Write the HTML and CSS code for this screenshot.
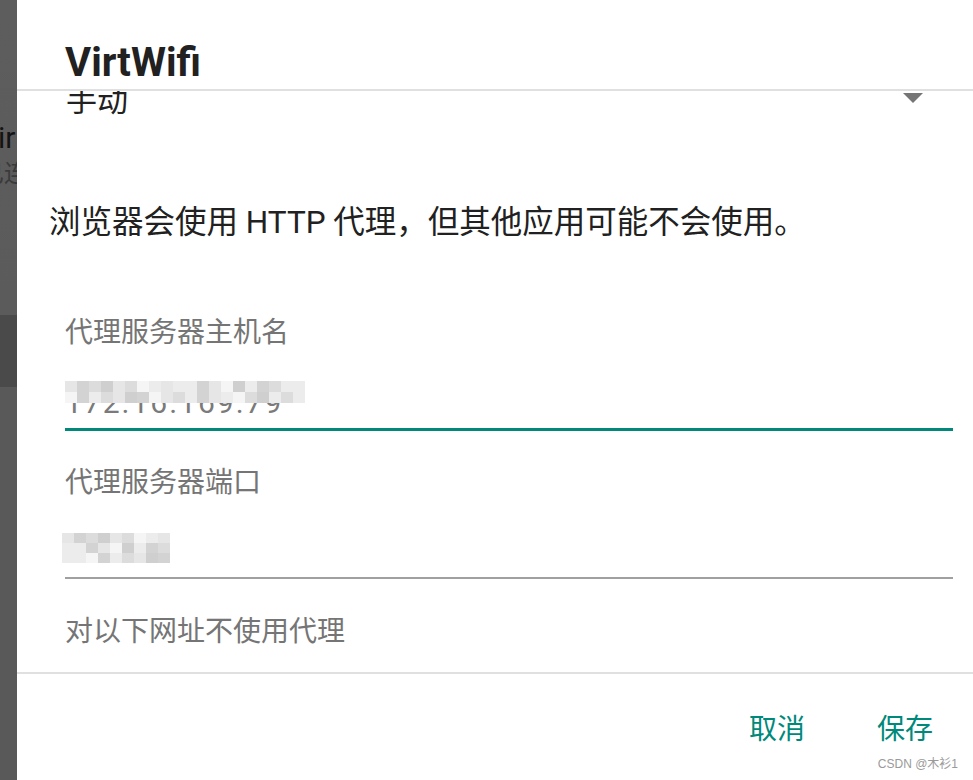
FILE: index.html
```html
<!DOCTYPE html>
<html lang="zh-CN">

<head>
    <meta charset="UTF-8">
    <meta name="viewport" content="width=device-width, initial-scale=1.0">
    <title>VirtWifi 代理</title>
    <link rel="stylesheet" href="styles.css">
</head>

<body>
    <div class="screen">
        <div class="backdrop">
            <div class="peek-title">ir</div>
            <div class="peek-sub">已连接</div>
        </div>

        <div class="dialog">
            <div class="dialog-header">
                <h1 class="dialog-title">VirtWifi</h1>
            </div>

            <div class="dialog-body">
                <div class="spinner">
                    <span class="spinner-value">手动</span>
                    <span class="spinner-arrow"></span>
                </div>

                <p class="message">浏览器会使用 HTTP 代理，但其他应用可能不会使用。</p>

                <div class="field first">
                    <div class="field-label">代理服务器主机名</div>
                    <div class="field-input focused">
                        <span class="field-text">172.16.169.79</span>
                        <div class="mosaic mosaic-host">
                            <span></span><span></span><span></span><span></span><span></span>
                            <span></span><span></span><span></span><span></span><span></span>
                            <span></span><span></span><span></span><span></span><span></span>
                            <span></span><span></span><span></span><span></span><span></span>
                            <span></span><span></span><span></span><span></span><span></span>
                            <span></span><span></span><span></span><span></span><span></span>
                            <span></span><span></span><span></span><span></span><span></span>
                            <span></span><span></span><span></span><span></span><span></span>
                        </div>
                    </div>
                </div>

                <div class="field">
                    <div class="field-label">代理服务器端口</div>
                    <div class="field-input port">
                        <div class="mosaic mosaic-port">
                            <span></span><span></span><span></span><span></span><span></span>
                            <span></span><span></span><span></span><span></span><span></span>
                            <span></span><span></span><span></span><span></span><span></span>
                            <span></span><span></span><span></span><span></span><span></span>
                            <span></span><span></span><span></span><span></span><span></span>
                            <span></span><span></span>
                        </div>
                    </div>
                </div>

                <div class="field last">
                    <div class="field-label">对以下网址不使用代理</div>
                </div>
            </div>

            <div class="dialog-footer">
                <button class="text-btn">取消</button>
                <button class="text-btn">保存</button>
            </div>

            <div class="watermark">CSDN @木衫1</div>
        </div>
    </div>
</body>

</html>
```

FILE: styles.css
```css
body {
    margin: 0;
    font-family: Roboto, "Noto Sans CJK SC", sans-serif;
    overflow: hidden;
}

.screen {
    display: flex;
    width: 973px;
    height: 780px;
}

/* dimmed settings page behind the dialog */
.backdrop {
    width: 17px;
    flex-shrink: 0;
    overflow: hidden;
    background: linear-gradient(#5d5d5d 0, #5b5b5b 315px, #4a4a4a 315px, #4a4a4a 387px, #595959 387px);
    white-space: nowrap;
}

.peek-title {
    margin: 118px 0 0 -2px;
    font-size: 30px;
    line-height: 40px;
    color: #141414;
}

.peek-sub {
    margin-left: -20px;
    font-size: 24px;
    line-height: 32px;
    color: #3a3a3a;
}

.dialog {
    position: relative;
    flex: 1;
    display: flex;
    flex-direction: column;
    background: white;
}

.dialog-header {
    height: 89px;
    border-bottom: 2px solid #e0e0e0;
    flex-shrink: 0;
}

.dialog-title {
    margin: 0;
    padding: 39px 0 0 48px;
    font-size: 40px;
    line-height: 48px;
    font-weight: 700;
    color: #212121;
}

.dialog-body {
    flex: 1;
    overflow: hidden;
}

.spinner {
    display: flex;
    justify-content: space-between;
    margin-top: -10px;
    padding: 0 50px 0 49px;
    height: 40px;
}

.spinner-value {
    font-size: 31px;
    line-height: 40px;
    color: #212121;
}

.spinner-arrow {
    margin-top: 12px;
    width: 0;
    height: 0;
    border-left: 10px solid transparent;
    border-right: 10px solid transparent;
    border-top: 10px solid #757575;
}

.message {
    margin: 82px 0 0;
    padding-left: 32px;
    font-size: 31.5px;
    line-height: 40px;
    color: #212121;
}

.field {
    margin-top: 32px;
}

.field.first {
    margin-top: 70px;
}

.field.last {
    margin-top: 33px;
}

.field-label {
    padding-left: 48px;
    font-size: 28px;
    line-height: 40px;
    color: #757575;
}

.field-input {
    position: relative;
    margin: 30px 20px 0 48px;
    height: 40px;
    padding-bottom: 5px;
    border-bottom: 3px solid #00897b;
}

.field-input.port {
    margin-top: 30px;
    height: 34px;
    padding-bottom: 10px;
    border-bottom: 2px solid #a0a0a0;
}

.field-text {
    font-size: 30px;
    line-height: 40px;
    color: #7a7a7a;
    letter-spacing: 2px;
}

/* pixelated blur over the private values */
.mosaic {
    display: grid;
    grid-template-columns: repeat(20, 12px);
    grid-auto-rows: 11px;
}

.mosaic-host {
    position: absolute;
    left: 0;
    top: -2px;
    background: white;
}

.mosaic-port {
    grid-template-columns: repeat(9, 12px);
    grid-auto-rows: 10px;
    margin-left: -3px;
}

.mosaic span {
    background: #ececec;
}

.mosaic span:nth-child(3n) {
    background: #dcdcdc;
}

.mosaic span:nth-child(4n+1) {
    background: #e6e6e6;
}

.mosaic span:nth-child(5n+2) {
    background: #d3d3d3;
}

.mosaic span:nth-child(7n) {
    background: #f5f5f5;
}

.mosaic span:nth-child(11n+4) {
    background: #cfcfcf;
}

.dialog-footer {
    box-sizing: border-box;
    height: 108px;
    flex-shrink: 0;
    border-top: 2px solid #e0e0e0;
    display: flex;
    justify-content: flex-end;
    align-items: flex-start;
    gap: 72px;
    padding: 36px 40px 0 0;
}

.text-btn {
    padding: 0;
    border: none;
    background: none;
    font-family: inherit;
    font-size: 28px;
    line-height: 40px;
    color: #00897b;
    cursor: pointer;
}

.watermark {
    position: absolute;
    right: 15px;
    bottom: 9px;
    font-family: "Liberation Sans", "Noto Sans CJK SC", sans-serif;
    font-size: 12px;
    color: #9a9a9a;
}
```
